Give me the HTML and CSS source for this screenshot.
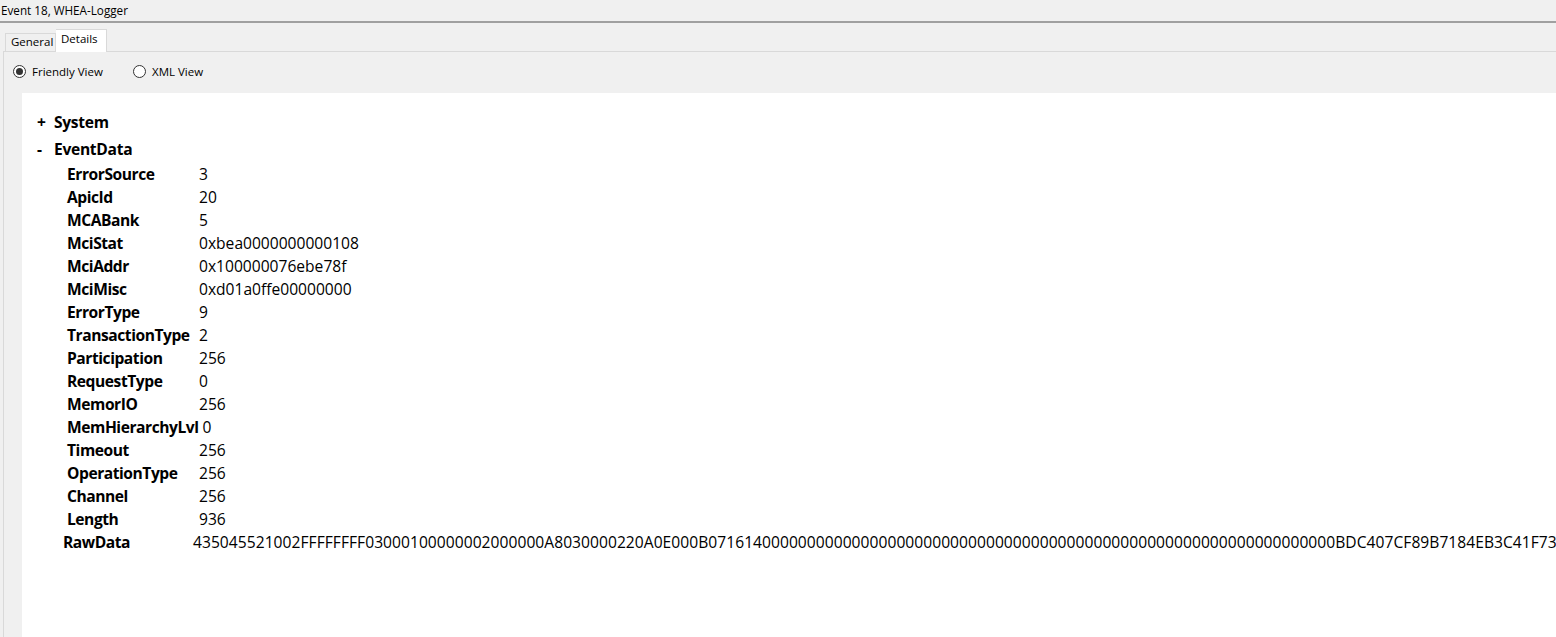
FILE: index.html
```html
<!DOCTYPE html>
<html>
<head>
<meta charset="utf-8">
<title>Event 18, WHEA-Logger</title>
<link rel="stylesheet" href="styles.css">
</head>
<body>

<div class="titlebar">Event 18, WHEA-Logger</div>

<div class="tabs">
  <div class="tab">General</div>
  <div class="tab active">Details</div>
</div>

<div class="pane">
  <div class="views">
    <label class="view"><span class="radio checked"></span>Friendly View</label>
    <label class="view"><span class="radio"></span>XML View</label>
  </div>

  <div class="content">
    <div class="node"><span class="toggle">+</span>System</div>
    <div class="node open"><span class="toggle">-</span>EventData</div>

    <div class="row"><span class="name">ErrorSource</span><span class="value">3</span></div>
    <div class="row"><span class="name">ApicId</span><span class="value">20</span></div>
    <div class="row"><span class="name">MCABank</span><span class="value">5</span></div>
    <div class="row"><span class="name">MciStat</span><span class="value">0xbea0000000000108</span></div>
    <div class="row"><span class="name">MciAddr</span><span class="value">0x100000076ebe78f</span></div>
    <div class="row"><span class="name">MciMisc</span><span class="value">0xd01a0ffe00000000</span></div>
    <div class="row"><span class="name">ErrorType</span><span class="value">9</span></div>
    <div class="row"><span class="name">TransactionType</span><span class="value">2</span></div>
    <div class="row"><span class="name">Participation</span><span class="value">256</span></div>
    <div class="row"><span class="name">RequestType</span><span class="value">0</span></div>
    <div class="row"><span class="name">MemorIO</span><span class="value">256</span></div>
    <div class="row"><span class="name">MemHierarchyLvl</span><span class="value">0</span></div>
    <div class="row"><span class="name">Timeout</span><span class="value">256</span></div>
    <div class="row"><span class="name">OperationType</span><span class="value">256</span></div>
    <div class="row"><span class="name">Channel</span><span class="value">256</span></div>
    <div class="row"><span class="name">Length</span><span class="value">936</span></div>
    <div class="row raw"><span class="name">RawData</span><span class="value hex">435045521002FFFFFFFF03000100000002000000A8030000220A0E000B0716140000000000000000000000000000000000000000000000000000000000000000BDC407CF89B7184EB3C41F73</span></div>
  </div>
</div>

</body>
</html>
```

FILE: styles.css
```css
html, body {
  margin: 0;
  height: 100%;
}
body {
  background-color: #f0f0f0;
  font-family: "Open Sans", "Noto Sans", sans-serif;
  color: #000;
  overflow: hidden;
  display: flex;
  flex-direction: column;
}

/* window caption */
.titlebar {
  height: 21px;
  line-height: 20px;
  font-size: 11.7px;
  padding-left: 1px;
  border-bottom: 2px solid #a0a0a0;
}

/* tab strip */
.tabs {
  display: flex;
  align-items: flex-end;
  height: 28px;
  padding-left: 5px;
}
.tab {
  font-size: 11.5px;
  height: 17px;
  line-height: 15px;
  padding: 0 5px;
  width: 39px;
  border: 1px solid #d9d9d9;
  border-bottom: none;
  background-color: #f0f0f0;
}
.tab.active {
  height: 22px;
  line-height: 18px;
  width: 40px;
  background-color: #fff;
  border-left: none;
  position: relative;
  margin-bottom: -1px;
}

/* tab page */
.pane {
  flex: 1;
  margin-left: 3px;
  border-top: 1px solid #d9d9d9;
  border-left: 1px solid #d9d9d9;
  display: flex;
  flex-direction: column;
  min-height: 0;
}
.views {
  display: flex;
  align-items: center;
  height: 16px;
  margin: 11px 0 14px;
  padding-left: 9px;
  font-size: 11.5px;
}
.view {
  display: flex;
  align-items: center;
  width: 120px;
}
.radio {
  box-sizing: border-box;
  width: 13px;
  height: 13px;
  border: 1px solid #333;
  border-radius: 50%;
  background-color: #fff;
  margin-right: 6px;
  display: flex;
  align-items: center;
  justify-content: center;
}
.radio.checked::after {
  content: "";
  width: 7px;
  height: 7px;
  border-radius: 50%;
  background-color: #333;
}

/* friendly view */
.content {
  flex: 1;
  margin-left: 18px;
  background-color: #fff;
  padding-top: 18px;
  font-size: 15.6px;
  line-height: 23px;
  white-space: nowrap;
  overflow: hidden;
}
.node {
  font-weight: bold;
  padding-left: 15px;
  letter-spacing: -0.3px;
}
.node.open {
  margin-top: 4px;
  margin-bottom: 2px;
}
.toggle {
  display: inline-block;
  width: 17px;
}
.row {
  display: flex;
  padding-left: 45px;
}
.row .name {
  font-weight: bold;
  letter-spacing: -0.45px;
  min-width: 128px;
  padding-right: 4px;
}
.row.raw {
  padding-left: 41px;
}
.row.raw .name {
  min-width: 126px;
}
.hex {
  letter-spacing: 0.04px;
}
```
